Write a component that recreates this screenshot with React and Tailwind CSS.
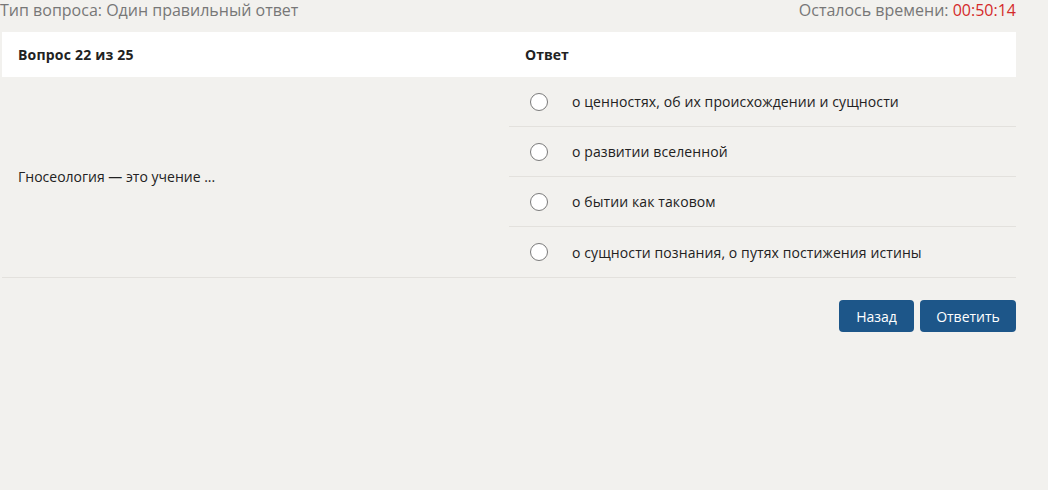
import React, { useState } from 'react';

const answers = [
  'о ценностях, об их происхождении и сущности',
  'о развитии вселенной',
  'о бытии как таковом',
  'о сущности познания, о путях постижения истины',
];

const App = () => {
  const [selected, setSelected] = useState(null);

  return (
    <div className="min-h-[492px] bg-[#f2f1ee] font-['Open_Sans',sans-serif] text-[#222]">
      <div className="w-[1016px]">
        <div className="flex justify-between items-center h-[24px] -mt-[2px] text-[16px] text-[#777]">
          <span>Тип вопроса: Один правильный ответ</span>
          <span>
            Осталось времени: <span className="text-[#d42a2a]">00:50:14</span>
          </span>
        </div>

        <div className="ml-[2px] mt-[10px]">
          <div className="grid grid-cols-2 h-[45px] bg-white items-center text-[14px] font-bold">
            <div className="pl-[16px] tracking-[0.2px]">Вопрос 22 из 25</div>
            <div className="pl-[16px]">Ответ</div>
          </div>

          <div className="grid grid-cols-2 border-b border-[#e3e1dd]">
            <div className="flex items-center pl-[16px] text-[14px] pb-[1px]">
              Гносеология — это учение ...
            </div>
            <div>
              {answers.map((text, i) => (
                <label
                  key={i}
                  onClick={() => setSelected(i)}
                  className={`flex items-center h-[50px] pl-[21px] cursor-pointer text-[14px] ${i < answers.length - 1 ? 'border-b border-[#e3e1dd]' : ''}`}
                >
                  <span className="flex items-center justify-center w-[18px] h-[18px] rounded-full border border-[#7a7a7a] bg-white">
                    {selected === i && <span className="w-[8px] h-[8px] rounded-full bg-[#1d5689]" />}
                  </span>
                  <span className="ml-[24px] tracking-[0.1px]">{text}</span>
                </label>
              ))}
            </div>
          </div>

          <div className="flex justify-end gap-[6px] mt-[22px]">
            <button className="h-[32px] w-[75px] rounded-[4px] bg-[#1d5689] text-white text-[14px]">
              Назад
            </button>
            <button className="h-[32px] w-[96px] rounded-[4px] bg-[#1d5689] text-white text-[14px]">
              Ответить
            </button>
          </div>
        </div>
      </div>
    </div>
  );
};

export default App;
